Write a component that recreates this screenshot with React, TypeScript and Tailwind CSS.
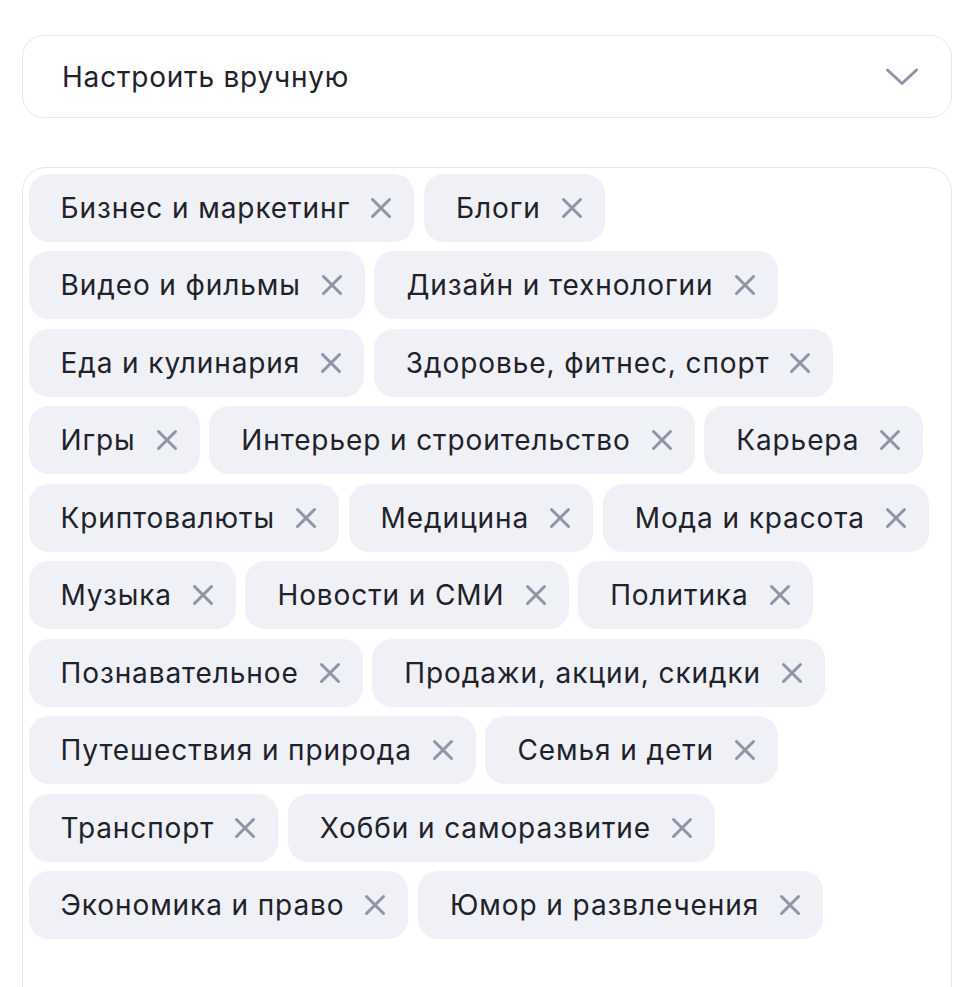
import React from 'react'

const topics = [
  'Бизнес и маркетинг',
  'Блоги',
  'Видео и фильмы',
  'Дизайн и технологии',
  'Еда и кулинария',
  'Здоровье, фитнес, спорт',
  'Игры',
  'Интерьер и строительство',
  'Карьера',
  'Криптовалюты',
  'Медицина',
  'Мода и красота',
  'Музыка',
  'Новости и СМИ',
  'Политика',
  'Познавательное',
  'Продажи, акции, скидки',
  'Путешествия и природа',
  'Семья и дети',
  'Транспорт',
  'Хобби и саморазвитие',
  'Экономика и право',
  'Юмор и развлечения'
]

const CloseIcon = () => (
  <svg width="22" height="22" viewBox="0 0 22 22" fill="none" className="shrink-0">
    <path d="M2.5 2.5L19.5 19.5M19.5 2.5L2.5 19.5" stroke="#8e95a6" strokeWidth="3" strokeLinecap="round" />
  </svg>
)

const Chip = ({ label }: { label: string }) => (
  <div className="flex h-[68px] items-center gap-[20px] rounded-[20px] bg-[#eff1f6] pl-[32px] pr-[22px]">
    <span className="text-[28px] leading-none tracking-[0.9px] text-[#1f222b]">{label}</span>
    <CloseIcon />
  </div>
)

export default function App() {
  return (
    <div
      className="min-h-[987px] bg-white px-[22px] pt-[35px]"
      style={{ fontFamily: 'Inter, "Noto Sans", sans-serif' }}
    >
      <div className="flex h-[83px] items-center justify-between rounded-[22px] border-[1.5px] border-[#e5e7ee] pl-[39px] pr-[32px]">
        <span className="text-[28px] leading-none tracking-[0.8px] text-[#1f222b]">Настроить вручную</span>
        <svg width="34" height="20" viewBox="0 0 34 20" fill="none">
          <path d="M2.5 3L17 16.5L31.5 3" stroke="#8e95a6" strokeWidth="3" strokeLinecap="round" strokeLinejoin="round" />
        </svg>
      </div>

      <div className="mt-[49px] h-[860px] rounded-[24px] border-[1.5px] border-[#e5e7ee] p-[5.5px]">
        <div className="flex flex-wrap gap-x-[9.6px] gap-y-[9.55px]">
          {topics.map((t) => (
            <Chip key={t} label={t} />
          ))}
        </div>
      </div>
    </div>
  )
}
